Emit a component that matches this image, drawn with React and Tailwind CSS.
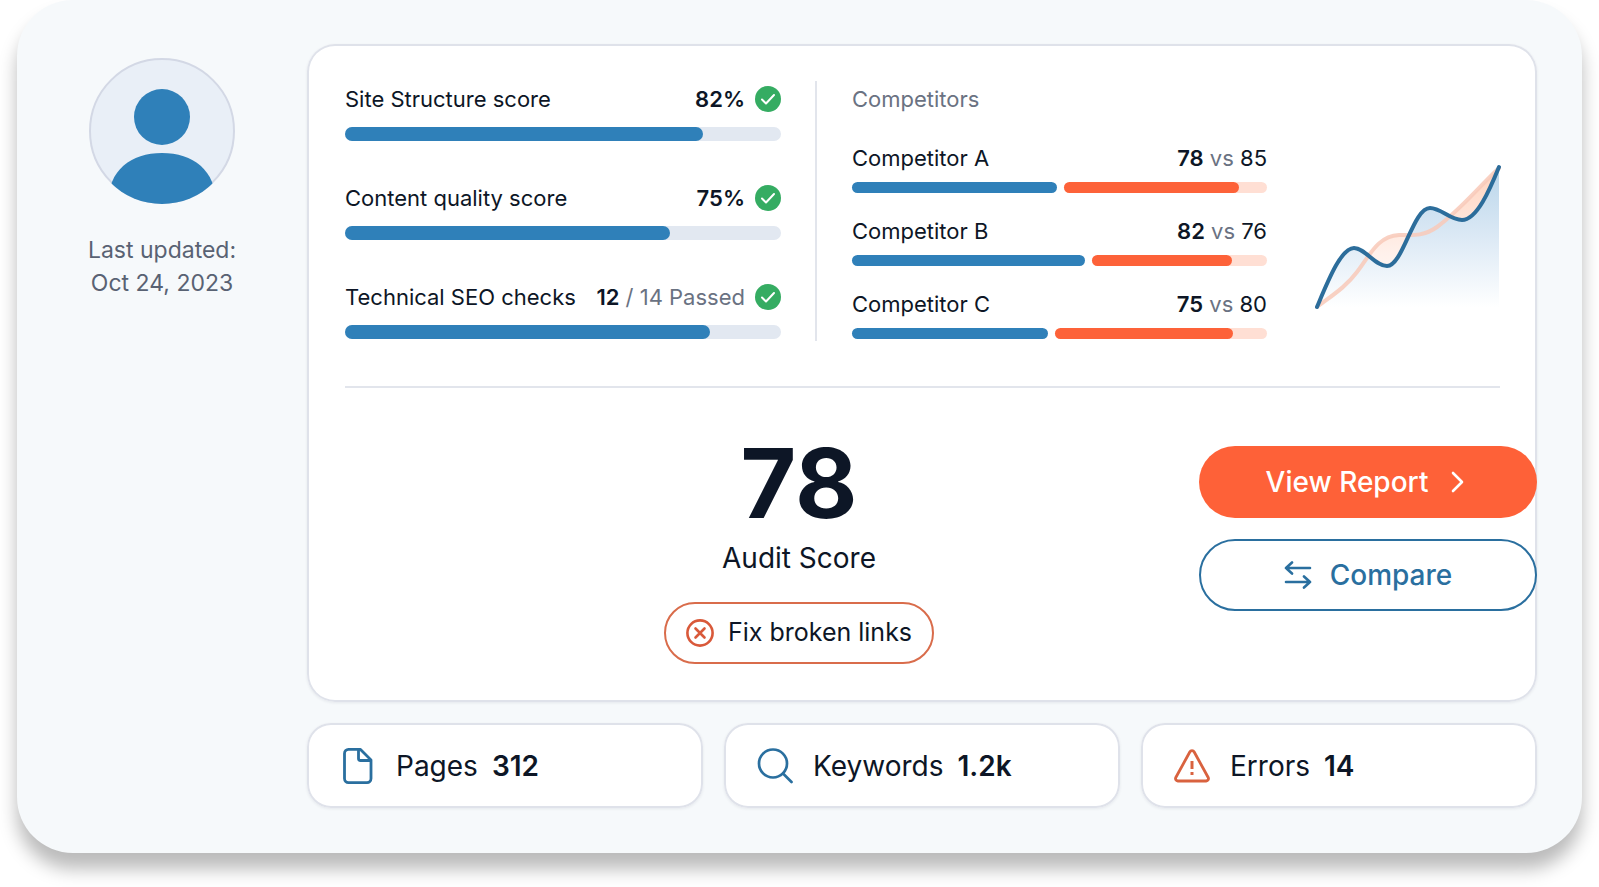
const scores = [
  { label: 'Site Structure score', value: '82%', note: '', fill: 82 },
  { label: 'Content quality score', value: '75%', note: '', fill: 74.5 },
  { label: 'Technical SEO checks', value: '12', note: ' / 14 Passed', fill: 83.7 },
];

const competitors = [
  { name: 'Competitor A', own: 78, theirs: 85, ownWidth: 49.4, fill: 86 },
  { name: 'Competitor B', own: 82, theirs: 76, ownWidth: 56.1, fill: 80 },
  { name: 'Competitor C', own: 75, theirs: 80, ownWidth: 47.2, fill: 84 },
];

const stats = [
  { label: 'Pages', value: '312', icon: <PageIcon /> },
  { label: 'Keywords', value: '1.2k', icon: <SearchIcon /> },
  { label: 'Errors', value: '14', icon: <WarningIcon /> },
];

const ownLine = 'M0 142 C11 116 24 83 37 83 C48 83 58 101 70 101 C86 101 96 43 113 43 C124 43 133 55 145 55 C160 55 173 24 182 2';
const theirLine = 'M0 142 C14 131 28 123 40 107 C52 92 60 71 82 70 C94 70 106 72 120 62 C142 46 158 26 182 3';

function Avatar() {
  return (
    <svg className="size-[146px]" viewBox="0 0 146 146" role="img" aria-label="User">
      <defs>
        <clipPath id="avatar-clip">
          <circle cx="73" cy="73" r="73" />
        </clipPath>
      </defs>
      <circle cx="73" cy="73" r="72" fill="#e9eff7" stroke="#d3d8e5" strokeWidth="2" />
      <circle cx="73" cy="59" r="28" fill="#2f80b9" />
      <path d="M19 146 C19 112 42 95 73 95 C104 95 127 112 127 146 Z" fill="#2f80b9" clipPath="url(#avatar-clip)" />
    </svg>
  );
}

function CheckIcon() {
  return (
    <svg className="size-[26px] shrink-0" viewBox="0 0 26 26" fill="none">
      <circle cx="13" cy="13" r="13" fill="#35ac62" />
      <path d="M7 13.5 L11 17.5 L19 9" stroke="#fff" strokeWidth="2" strokeLinecap="round" strokeLinejoin="round" />
    </svg>
  );
}

function PageIcon() {
  return (
    <svg className="size-9" viewBox="0 0 36 36" fill="none" stroke="#2a6f9f" strokeWidth="2.8" strokeLinejoin="round">
      <path d="M8.5 1.4 H20.5 L31 12 V30.6 A4 4 0 0 1 27 34.6 H8.5 A4 4 0 0 1 4.5 30.6 V5.4 A4 4 0 0 1 8.5 1.4 Z" />
      <path d="M18.5 2 V10.5 A2 2 0 0 0 20.5 12.5 H30.5" />
    </svg>
  );
}

function SearchIcon() {
  return (
    <svg className="size-9" viewBox="0 0 36 36" fill="none" stroke="#2a6f9f" strokeWidth="2.7" strokeLinecap="round">
      <circle cx="16" cy="15.5" r="14" />
      <path d="M26 25.5 L34.5 34" />
    </svg>
  );
}

function WarningIcon() {
  return (
    <svg className="size-9" viewBox="0 0 36 36" fill="none" stroke="#d9623f" strokeWidth="2.8" strokeLinecap="round" strokeLinejoin="round">
      <path d="M15.8 4 L1.8 29.5 A2.4 2.4 0 0 0 3.8 33 H32.2 A2.4 2.4 0 0 0 34.2 29.5 L20.2 4 A2.5 2.5 0 0 0 15.8 4 Z" />
      <path d="M18 13 V21" strokeWidth="3" strokeLinecap="butt" />
      <path d="M18 24 V27" strokeWidth="3" strokeLinecap="butt" />
    </svg>
  );
}

function TrendChart() {
  return (
    <svg className="mb-8 ml-[50px] h-[144px] w-[183px] shrink-0 self-end overflow-visible" viewBox="0 0 183 144" fill="none" role="img" aria-label="Score trend">
      <defs>
        <linearGradient id="own-area" x1="0" y1="0" x2="0" y2="1">
          <stop offset="0" stopColor="#b9d5ea" />
          <stop offset="0.5" stopColor="#dce9f5" />
          <stop offset="1" stopColor="#ffffff" />
        </linearGradient>
        <linearGradient id="their-area" x1="0" y1="0" x2="0" y2="1">
          <stop offset="0" stopColor="#ffd3be" />
          <stop offset="0.6" stopColor="#fff0ea" />
          <stop offset="1" stopColor="#ffffff" />
        </linearGradient>
      </defs>
      <path d={`${theirLine} V142 Z`} fill="url(#their-area)" />
      <path d={`${ownLine} V142 Z`} fill="url(#own-area)" />
      <path d={theirLine} stroke="#f8c9b8" strokeWidth="4" strokeLinecap="round" opacity="0.85" />
      <path d={ownLine} stroke="#2c6d9b" strokeWidth="4" strokeLinecap="round" />
    </svg>
  );
}

function ScoreRow({ label, value, note, fill }) {
  return (
    <div className="flex flex-col gap-3.5">
      <div className="flex h-7 items-center text-[22px] leading-7 whitespace-nowrap">
        <span>{label}</span>
        <p className="mr-2.5 ml-auto text-gray-500">
          <span className="font-semibold text-[#0d1626]">{value}</span>
          {note}
        </p>
        <CheckIcon />
      </div>
      <div className="h-3.5 rounded-full bg-[#e2e8f1]">
        <div className="h-full rounded-full bg-[#2f80b9]" style={{ width: `${fill}%` }} />
      </div>
    </div>
  );
}

function CompetitorRow({ name, own, theirs, ownWidth, fill }) {
  return (
    <div className="flex flex-col gap-2.5">
      <div className="flex justify-between text-[22px] leading-7 whitespace-nowrap">
        <span>{name}</span>
        <p>
          <span className="font-semibold">{own}</span>
          <span className="text-gray-500"> vs </span>
          <span>{theirs}</span>
        </p>
      </div>
      <div className="flex h-[11px] gap-[7px]">
        <div className="shrink-0 rounded-full bg-[#2f80b9]" style={{ width: `${ownWidth}%` }} />
        <div className="flex-1 rounded-full bg-[#ffdfd4]">
          <div className="h-full rounded-full bg-[#fd6239]" style={{ width: `${fill}%` }} />
        </div>
      </div>
    </div>
  );
}

export default function App() {
  return (
    <div className="bg-white px-[17px] pb-[34px] font-[Inter,sans-serif] text-[#0d1626]">
      <div className="flex rounded-[56px] bg-[#f6f9fb] pt-11 pr-[45px] pb-[45px] shadow-[0_16px_18px_rgba(0,0,0,0.27)]">
        <aside className="flex w-[290px] shrink-0 flex-col items-center pt-3.5">
          <Avatar />
          <p className="mt-[30px] text-center text-[23px] leading-[33px] text-[#596273]">
            Last updated:
            <br />
            Oct 24, 2023
          </p>
        </aside>

        <main className="flex min-w-0 flex-1 flex-col gap-[21px]">
          <section className="rounded-[28px] bg-white pb-[38px] shadow-[0_1px_3px_rgba(30,40,70,0.08)] inset-ring-2 inset-ring-[#dfe2ea]">
            <div className="mr-[37px] ml-[38px] flex border-b-2 border-[#e2e5ec] pt-[37px] pb-[45px]">
              <div className="flex flex-[436] flex-col gap-[43px] pt-1">
                {scores.map((score) => (
                  <ScoreRow key={score.label} {...score} />
                ))}
              </div>
              <div className="mr-[35px] ml-[34px] w-0.5 bg-[#e2e5ec]" />
              <div className="flex-[415] pt-1 pb-0.5">
                <h2 className="mb-[31px] text-[22px] leading-7 text-gray-500">Competitors</h2>
                <div className="flex flex-col gap-6">
                  {competitors.map((item) => (
                    <CompetitorRow key={item.name} {...item} />
                  ))}
                </div>
              </div>
              <TrendChart />
            </div>

            <div className="flex items-start pt-[58px] pl-[92px]">
              <div className="flex flex-1 flex-col items-center">
                <p className="text-[96px] leading-[74px] font-bold">78</p>
                <p className="mt-5 text-[28px] leading-9">Audit Score</p>
                <button className="mt-[26px] flex h-[62px] items-center gap-[14px] rounded-full border-2 border-[#d96c4b] px-5 text-[25px]">
                  <svg className="size-7" viewBox="0 0 28 28" fill="none" stroke="#d9593a" strokeWidth="2.6" strokeLinecap="round">
                    <circle cx="14" cy="14" r="12.6" />
                    <path d="M9.5 9.5 L18.5 18.5 M18.5 9.5 L9.5 18.5" />
                  </svg>
                  Fix broken links
                </button>
              </div>
              <div className="flex w-[338px] shrink-0 flex-col gap-[21px] text-[28px] font-medium">
                <button className="flex h-[72px] items-center justify-center gap-[18px] rounded-full bg-[#fe6138] text-white">
                  View Report
                  <svg className="size-6" viewBox="0 0 24 24" fill="none" stroke="currentColor" strokeWidth="2.6" strokeLinecap="round" strokeLinejoin="round">
                    <path d="M7 3 L16 12 L7 21" />
                  </svg>
                </button>
                <button className="flex h-[72px] items-center justify-center gap-[18px] rounded-full border-2 border-[#2a6f9f] bg-white text-[#2a6f9f]">
                  <svg className="size-7" viewBox="0 0 28 28" fill="none" stroke="currentColor" strokeWidth="2.6" strokeLinecap="round" strokeLinejoin="round">
                    <path d="M26 7 H2 M8 1.5 L2 7 L8 12.5" />
                    <path d="M2 21 H26 M20 15.5 L26 21 L20 26.5" />
                  </svg>
                  Compare
                </button>
              </div>
            </div>
          </section>

          <div className="grid grid-cols-3 gap-[21px]">
            {stats.map((stat) => (
              <div key={stat.label} className="flex h-[85px] items-center rounded-3xl bg-white pl-[33px] text-[28px] shadow-[0_1px_3px_rgba(30,40,70,0.08)] inset-ring-2 inset-ring-[#dfe2ea]">
                {stat.icon}
                <span className="ml-5">{stat.label}</span>
                <span className="ml-3.5 font-semibold">{stat.value}</span>
              </div>
            ))}
          </div>
        </main>
      </div>
    </div>
  );
}
